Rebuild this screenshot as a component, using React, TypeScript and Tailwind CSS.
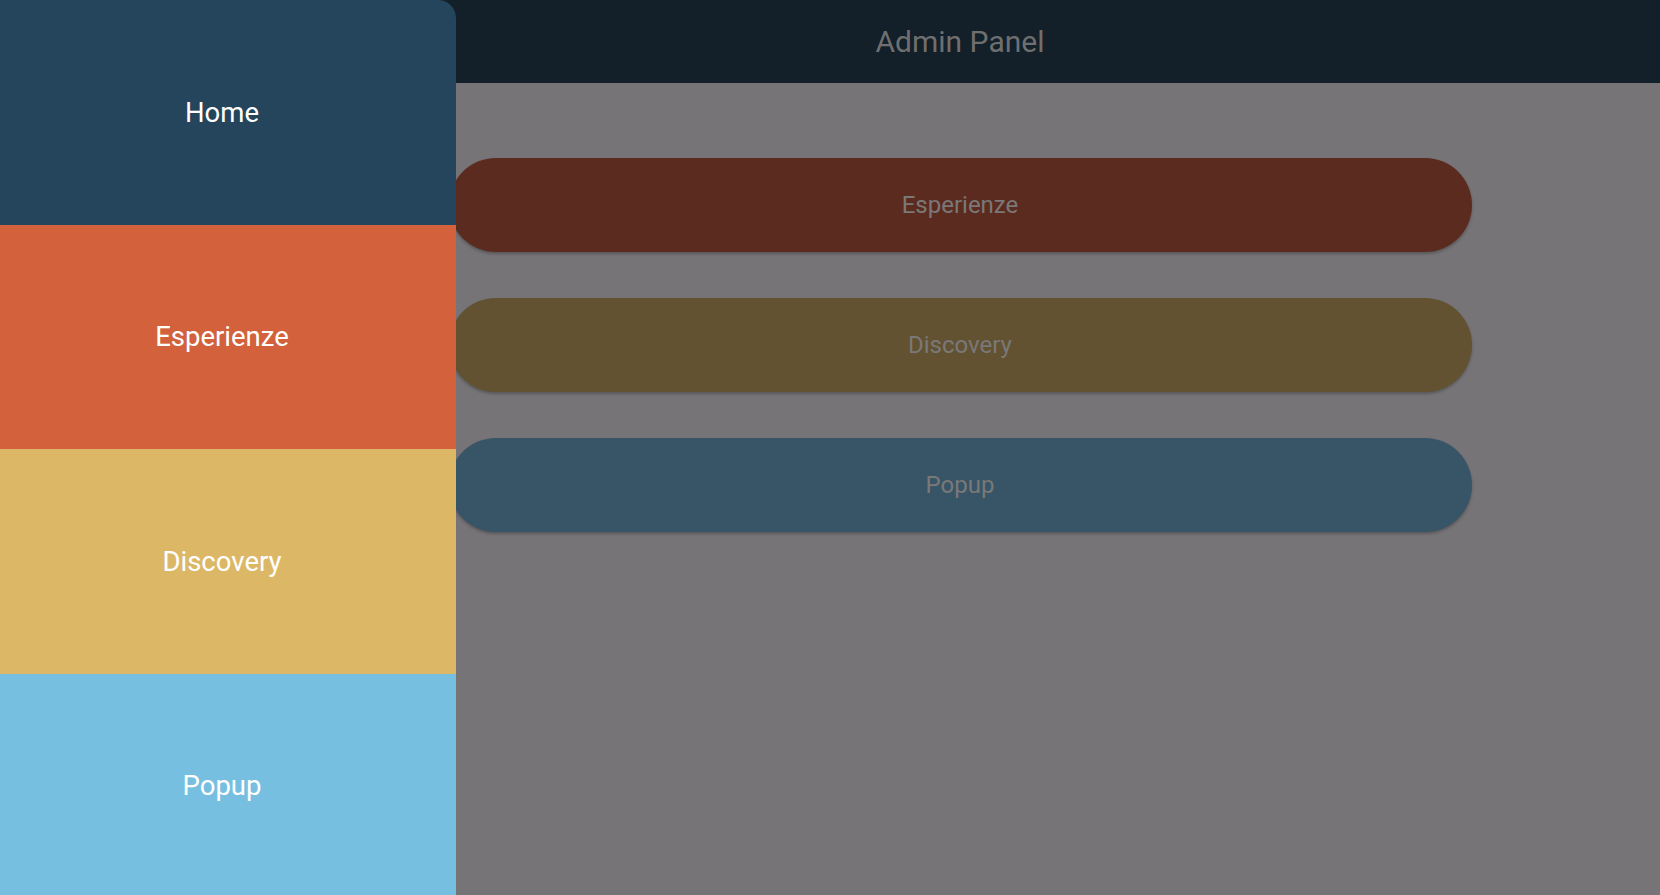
import React from "react"

const menu = [
  { label: "Home", bg: "bg-[#24455b]" },
  { label: "Esperienze", bg: "bg-[#d2613c]" },
  { label: "Discovery", bg: "bg-[#dcb866]" },
  { label: "Popup", bg: "bg-[#77bfe0]" },
]

const sections = [
  { label: "Esperienze", bg: "bg-[#5c2b1f]" },
  { label: "Discovery", bg: "bg-[#625232]" },
  { label: "Popup", bg: "bg-[#375567]" },
]

export default function App() {
  return (
    <div className="relative h-[895px] w-full overflow-hidden bg-[#767477] font-['Roboto',sans-serif]">
      {/* page underneath (dimmed by the open drawer) */}
      <div className="flex h-full flex-col pl-[260px]">
        <header className="flex h-[83px] shrink-0 items-center justify-center bg-[#131f29] -ml-[260px] pl-[260px]">
          <h1 className="text-[30px] font-normal text-[#6f6f6f]">Admin Panel</h1>
        </header>
        <div className="flex flex-col items-center gap-[46px] pt-[75px]">
          {sections.map((s) => (
            <button
              key={s.label}
              className={`flex h-[94px] w-[1023px] items-center justify-center rounded-full ${s.bg} text-[24px] text-[#7a7878] shadow-[0_2px_3px_rgba(0,0,0,0.25)]`}
            >
              {s.label}
            </button>
          ))}
        </div>
      </div>

      {/* drawer */}
      <nav className="absolute left-0 top-0 flex w-[456px] flex-col overflow-hidden rounded-tr-[18px]">
        {menu.map((m) => (
          <a
            key={m.label}
            href="#"
            className={`flex h-[224.5px] shrink-0 items-center justify-center ${m.bg} pr-[12px] text-[27.5px] text-white`}
          >
            {m.label}
          </a>
        ))}
      </nav>
    </div>
  )
}
